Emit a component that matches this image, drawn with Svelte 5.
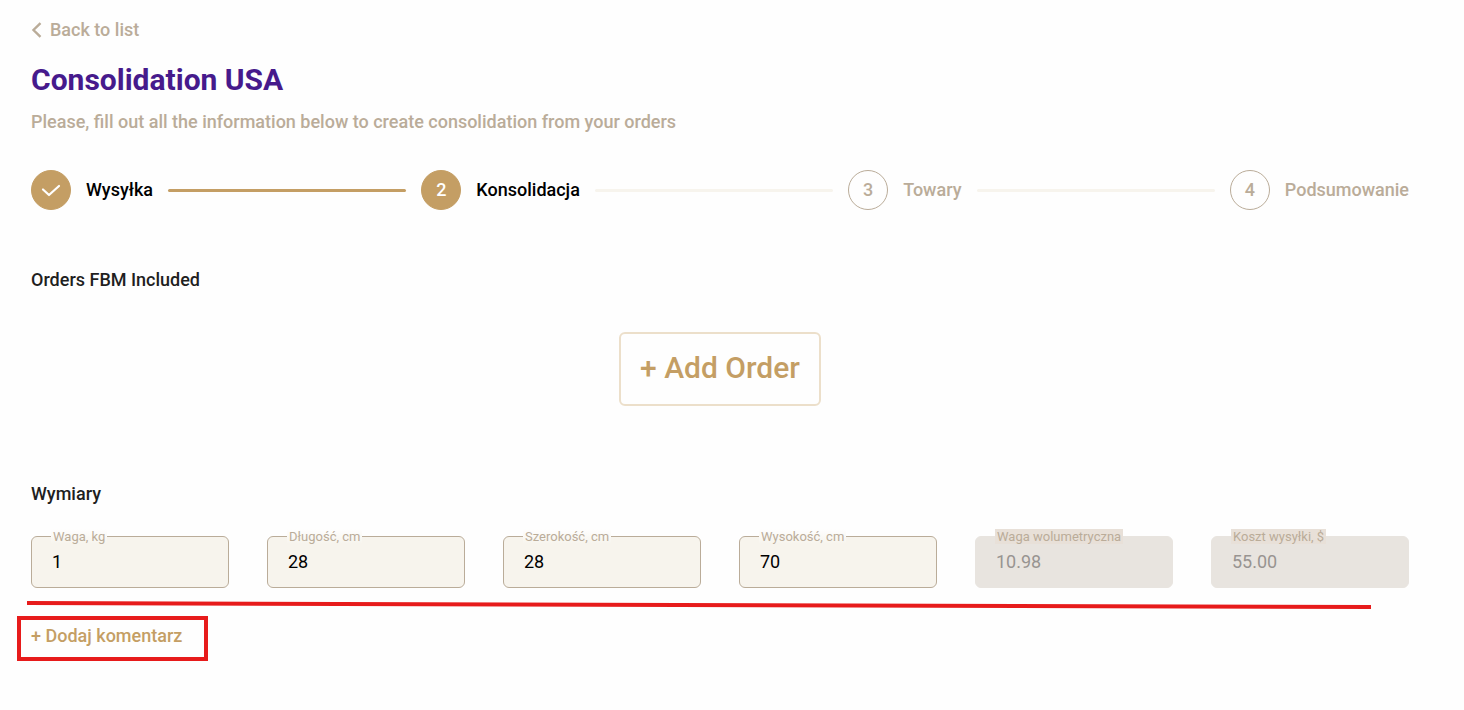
<script>
    let steps = [
        { label: 'Wysyłka', state: 'done' },
        { label: 'Konsolidacja', state: 'active' },
        { label: 'Towary', state: 'next' },
        { label: 'Podsumowanie', state: 'next' }
    ];

    let fields = [
        { id: 'weight', label: 'Waga, kg', value: '1' },
        { id: 'length', label: 'Długość, cm', value: '28' },
        { id: 'width', label: 'Szerokość, cm', value: '28' },
        { id: 'height', label: 'Wysokość, cm', value: '70' },
        { id: 'volume', label: 'Waga wolumetryczna', value: '10.98', disabled: true },
        { id: 'cost', label: 'Koszt wysyłki, $', value: '55.00', disabled: true }
    ];
</script>

<style>
    :global(body) {
        background: #fefefe;
    }

    .page {
        padding: 18px 55px 48px 31px;
        font-family: Roboto, "Liberation Sans", sans-serif;
        font-size: 18px;
        font-weight: 500;
        line-height: 24px;
        color: #1f1f1f;
    }

    .back {
        display: flex;
        align-items: center;
        gap: 8px;
        width: fit-content;
        color: #baac99;
        text-decoration: none;
    }

    h1 {
        margin: 20px 0 12px;
        font-size: 30px;
        font-weight: 700;
        line-height: 36px;
        color: #461a8c;
    }

    .lead {
        margin: 0 0 36px;
        color: #baac99;
    }

    .steps {
        display: flex;
        align-items: center;
        gap: 15px;
        margin: 0 0 58px;
        padding: 0;
        list-style: none;
    }

    .step {
        display: flex;
        align-items: center;
        gap: 15px;
        color: #000;
    }

    .step.next {
        color: #baac99;
    }

    .circle {
        box-sizing: border-box;
        display: flex;
        align-items: center;
        justify-content: center;
        width: 40px;
        height: 40px;
        border: 1px solid #c49e64;
        border-radius: 50%;
        background: #c49e64;
        color: #fff;
    }

    .next .circle {
        border-color: #baac99;
        background: none;
        color: #baac99;
    }

    .line {
        flex: 1;
        height: 3px;
        border-radius: 2px;
        background: #f7f4ed;
    }

    .line.done {
        background: #c49e64;
    }

    h2 {
        margin: 0;
        font-size: 18px;
        font-weight: 500;
        line-height: 24px;
    }

    button {
        border: 0;
        background: none;
        font: inherit;
        color: #c49e64;
        cursor: pointer;
    }

    .orders {
        display: flex;
        justify-content: center;
        padding: 40px 0 76px;
    }

    .add-order {
        padding: 16px 19px 18px;
        border: 2px solid #ecdfca;
        border-radius: 6px;
        font-size: 30px;
        line-height: 36px;
    }

    .fields {
        display: grid;
        grid-template-columns: repeat(6, 1fr);
        gap: 38px;
        margin-top: 30px;
    }

    .field {
        position: relative;
    }

    .field label {
        position: absolute;
        top: -7px;
        left: 20px;
        padding: 0 2px;
        background: linear-gradient(#fefefe, #f7f4ed);
        font-size: 13px;
        font-weight: 400;
        line-height: 15px;
        color: #baac99;
        white-space: nowrap;
    }

    .field input {
        display: block;
        box-sizing: border-box;
        width: 100%;
        height: 52px;
        padding: 0 20px 2px;
        border: 1px solid #baac99;
        border-radius: 6px;
        background: #f7f4ed;
        font: inherit;
        font-weight: 400;
        color: #000;
    }

    .field input:disabled {
        border-color: #e8e4df;
        background: #e8e4df;
        color: #989491;
    }

    .field input:disabled + label {
        background: #e8e0d8;
    }

    .underline {
        display: block;
        width: calc(100% - 34px);
        height: 8px;
        margin: 13px 0 7px -4px;
    }

    .comment {
        width: fit-content;
        margin-left: -14px;
        padding: 2px 22px 7px 10px;
        border: 4px solid #e71b1b;
    }

    .comment button {
        display: block;
        padding: 0;
        line-height: 28px;
    }
</style>

<div class="page">
    <a class="back" href="#list">
        <svg width="11" height="16" viewBox="0 0 11 16" fill="none" stroke="currentColor" stroke-width="2.4">
            <path d="M9.5 1.2 2.5 8l7 6.8" />
        </svg>
        Back to list
    </a>

    <h1>Consolidation USA</h1>
    <p class="lead">Please, fill out all the information below to create consolidation from your orders</p>

    <ol class="steps">
        {#each steps as step, i (step.label)}
            <li class="step {step.state}">
                <span class="circle">
                    {#if step.state === 'done'}
                        <svg width="20" height="14" viewBox="0 0 20 14" fill="none" stroke="currentColor" stroke-width="2.2" stroke-linecap="round" stroke-linejoin="round">
                            <path d="M2 6.5 8 12 18 3" />
                        </svg>
                    {:else}
                        {i + 1}
                    {/if}
                </span>
                {step.label}
            </li>
            {#if i < steps.length - 1}
                <li class="line {step.state}" aria-hidden="true"></li>
            {/if}
        {/each}
    </ol>

    <h2>Orders FBM Included</h2>
    <div class="orders">
        <button class="add-order" type="button">+ Add Order</button>
    </div>

    <h2>Wymiary</h2>
    <div class="fields">
        {#each fields as field (field.id)}
            <div class="field">
                <input id={field.id} type="text" value={field.value} disabled={field.disabled} />
                <label for={field.id}>{field.label}</label>
            </div>
        {/each}
    </div>

    <svg class="underline" viewBox="0 0 1344 8" preserveAspectRatio="none" aria-hidden="true">
        <path d="M0 2 1344 6" stroke="#e71b1b" stroke-width="4" />
    </svg>

    <div class="comment">
        <button type="button">+ Dodaj komentarz</button>
    </div>
</div>
